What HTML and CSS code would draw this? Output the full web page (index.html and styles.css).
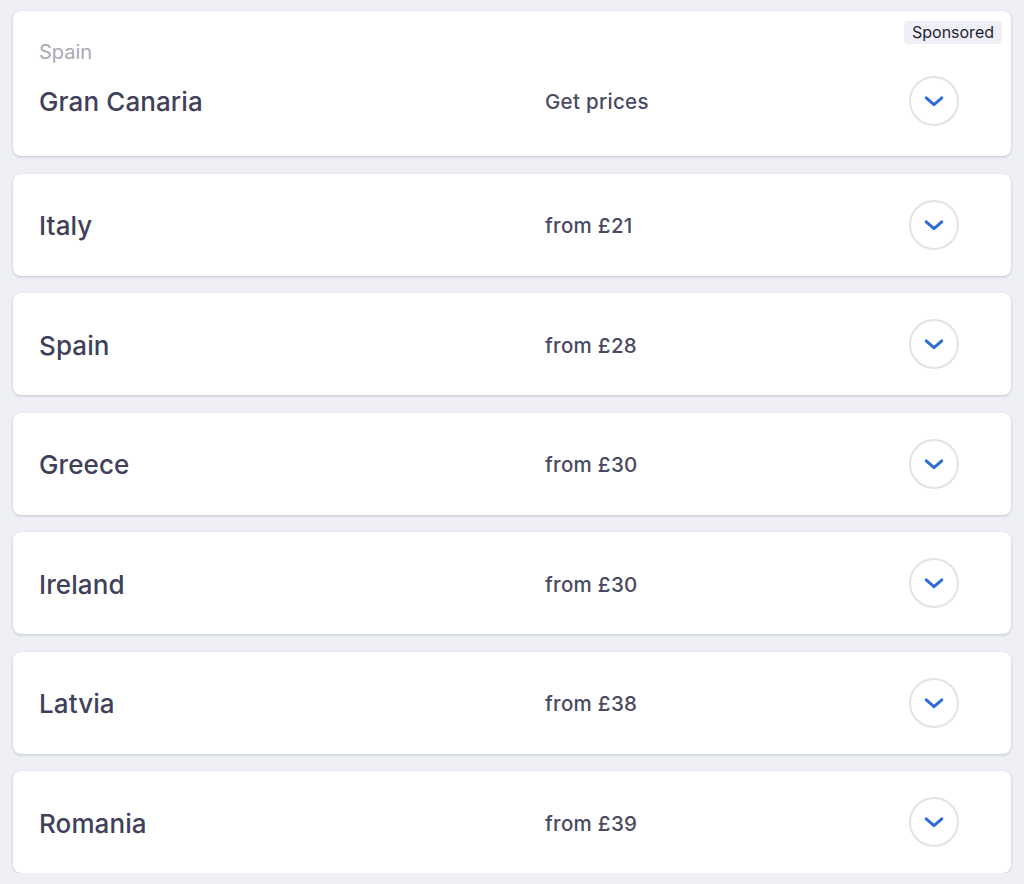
FILE: index.html
```html
<!DOCTYPE html>
<html lang="en">
<head>
<meta charset="utf-8">
<title>Destinations</title>
<link rel="stylesheet" href="styles.css">
</head>
<body>
<main class="list">
  <section class="card card-featured">
    <span class="badge">Sponsored</span>
    <div class="sub">Spain</div>
    <div class="row">
      <div class="name">Gran Canaria</div>
      <div class="price">Get prices</div>
      <button class="toggle" aria-label="Expand"><svg viewBox="0 0 24 24" width="22" height="22"><path d="M3.5 8.5 L12 16 L20.5 8.5" fill="none" stroke="#2f6ad9" stroke-width="3.2" stroke-linecap="round" stroke-linejoin="round"/></svg></button>
    </div>
  </section>
  <section class="card">
    <div class="row">
      <div class="name">Italy</div>
      <div class="price">from £21</div>
      <button class="toggle" aria-label="Expand"><svg viewBox="0 0 24 24" width="22" height="22"><path d="M3.5 8.5 L12 16 L20.5 8.5" fill="none" stroke="#2f6ad9" stroke-width="3.2" stroke-linecap="round" stroke-linejoin="round"/></svg></button>
    </div>
  </section>
  <section class="card">
    <div class="row">
      <div class="name">Spain</div>
      <div class="price">from £28</div>
      <button class="toggle" aria-label="Expand"><svg viewBox="0 0 24 24" width="22" height="22"><path d="M3.5 8.5 L12 16 L20.5 8.5" fill="none" stroke="#2f6ad9" stroke-width="3.2" stroke-linecap="round" stroke-linejoin="round"/></svg></button>
    </div>
  </section>
  <section class="card">
    <div class="row">
      <div class="name">Greece</div>
      <div class="price">from £30</div>
      <button class="toggle" aria-label="Expand"><svg viewBox="0 0 24 24" width="22" height="22"><path d="M3.5 8.5 L12 16 L20.5 8.5" fill="none" stroke="#2f6ad9" stroke-width="3.2" stroke-linecap="round" stroke-linejoin="round"/></svg></button>
    </div>
  </section>
  <section class="card">
    <div class="row">
      <div class="name">Ireland</div>
      <div class="price">from £30</div>
      <button class="toggle" aria-label="Expand"><svg viewBox="0 0 24 24" width="22" height="22"><path d="M3.5 8.5 L12 16 L20.5 8.5" fill="none" stroke="#2f6ad9" stroke-width="3.2" stroke-linecap="round" stroke-linejoin="round"/></svg></button>
    </div>
  </section>
  <section class="card">
    <div class="row">
      <div class="name">Latvia</div>
      <div class="price">from £38</div>
      <button class="toggle" aria-label="Expand"><svg viewBox="0 0 24 24" width="22" height="22"><path d="M3.5 8.5 L12 16 L20.5 8.5" fill="none" stroke="#2f6ad9" stroke-width="3.2" stroke-linecap="round" stroke-linejoin="round"/></svg></button>
    </div>
  </section>
  <section class="card">
    <div class="row">
      <div class="name">Romania</div>
      <div class="price">from £39</div>
      <button class="toggle" aria-label="Expand"><svg viewBox="0 0 24 24" width="22" height="22"><path d="M3.5 8.5 L12 16 L20.5 8.5" fill="none" stroke="#2f6ad9" stroke-width="3.2" stroke-linecap="round" stroke-linejoin="round"/></svg></button>
    </div>
  </section>
</main>
</body>
</html>
```
FILE: styles.css
```css
html, body {
  margin: 0;
  padding: 0;
  background: #eef0f6;
  font-family: Inter, "Noto Sans", "Liberation Sans", sans-serif;
  color: #40405a;
}

.list {
  display: flex;
  flex-direction: column;
  gap: 17.5px;
  padding: 11px 13px 0 13px;
}

.card {
  position: relative;
  background: #ffffff;
  border-radius: 8px;
  box-shadow: 0 1px 3px rgba(30, 32, 60, 0.20);
  height: 102px;
  box-sizing: border-box;
  padding: 26px 52px 26px 26px;
}

.card-featured {
  height: 145px;
  padding: 29px 52px 30px 26px;
}

.badge {
  position: absolute;
  top: 10px;
  right: 9px;
  background: #eff0f5;
  color: #1e1f36;
  font-size: 16px;
  line-height: 23px;
  padding: 0 8px;
  border-radius: 4px;
}

.sub {
  font-size: 20px;
  line-height: 24px;
  color: #a8a9b3;
  margin-bottom: 12px;
}

.row {
  display: flex;
  align-items: center;
  height: 50px;
}

.name {
  width: 506px;
  font-size: 26px;
  font-weight: 500;
  letter-spacing: 0.1px;
  color: #40405a;
  padding-top: 2px;
}

.price {
  flex: 1;
  font-size: 20.5px;
  font-weight: 500;
  letter-spacing: 0.3px;
  color: #4a4a62;
  padding-top: 2px;
}

.card-featured .name,
.card-featured .price {
  padding-top: 0;
}

.toggle {
  width: 50px;
  height: 50px;
  border-radius: 50%;
  border: 2px solid #e2e3e6;
  background: #ffffff;
  padding: 0;
  display: flex;
  align-items: center;
  justify-content: center;
  box-sizing: border-box;
}
```
